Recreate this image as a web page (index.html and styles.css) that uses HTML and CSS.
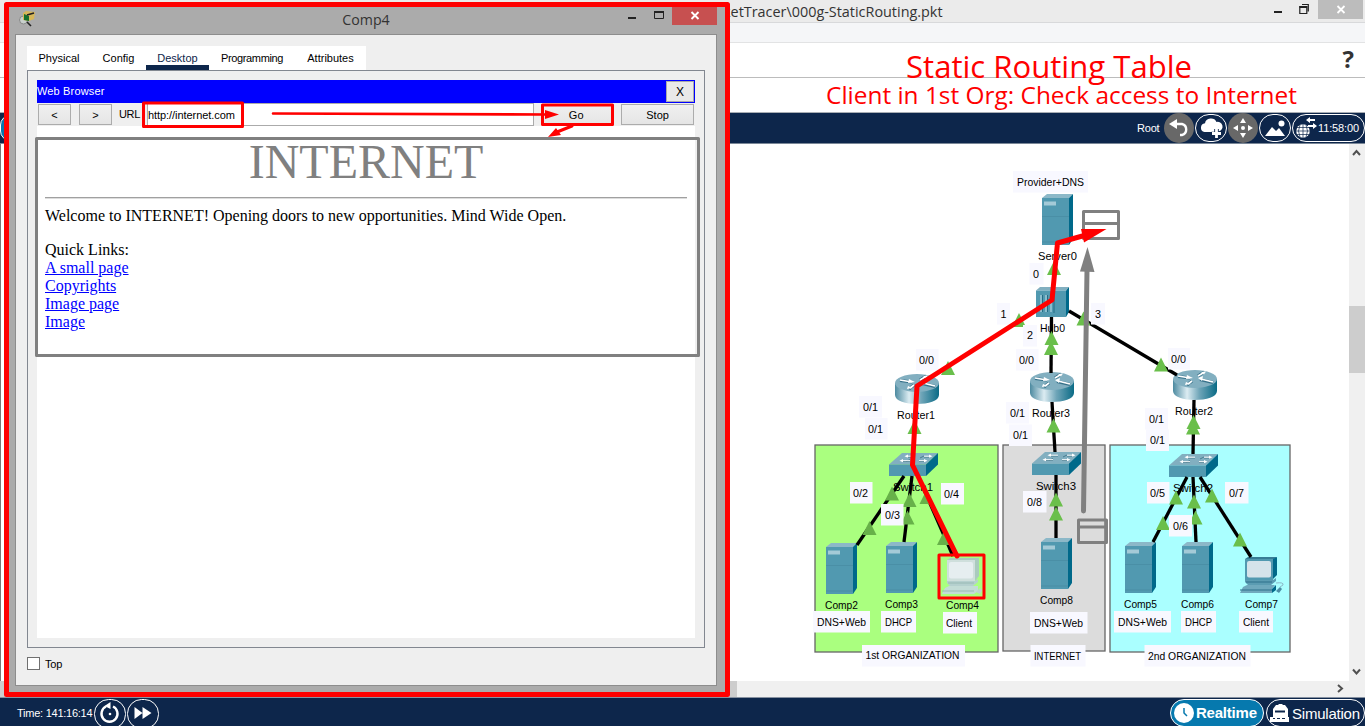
FILE: index.html
```html
<!DOCTYPE html>
<html lang="en">
<head>
<meta charset="utf-8">
<title>Packet Tracer</title>
<link rel="stylesheet" href="styles.css">
</head>
<body>
<div class="app">
  <header class="titlebar">
    <span class="path">ketTracer\000g-StaticRouting.pkt</span>
    <svg class="winbtns" width="100" height="22" viewBox="1265 0 100 22">
      <rect x="1318" width="45" height="19" fill="#bcbcbc"/>
      <path d="M1274 12h8" stroke="#222" stroke-width="2"/>
      <path d="M1299.8 6.5h7v7h-7zM1302 4.5h6.3v7" fill="none" stroke="#222" stroke-width="1.2"/><path d="M1299.5 7h7.5" stroke="#222" stroke-width="2"/>
      <path d="M1337.5 6l7 7m0-7l-7 7" stroke="#fff" stroke-width="1.8"/>
    </svg>
  </header>
  <div class="menubar"></div>
  <div class="toolbar"><span class="help">?</span></div>
  <div class="toolbar2"></div>
  <div class="navbar">
    <span class="edge"></span>
    <span class="root">Root</span>
    <svg width="202" height="30" viewBox="1163 113 202 30">
      <circle cx="1179" cy="128" r="15" fill="#686868"/>
      <path d="M1175 124h7a5.700 5.700 0 0 1 0 11h-2" fill="none" stroke="#fff" stroke-width="2.400"/><path d="M1169 124l8-5v10z" fill="#fff"/>
      <rect x="1195.500" y="114.500" width="31" height="27" rx="13.500" class="ring"/>
      <path d="M1204.500 132a4.400 4.400 0 0 1 .5-8.700 6 5.500 0 0 1 11.500-1.300 4.800 4.800 0 0 1 2.500 9.300l-1 .7z" fill="#fff"/><path d="M1216.500 129v10m-5-5h10" stroke="#0d264b" stroke-width="4.500"/><path d="M1216.500 129v9m-4.500-4.500h9" stroke="#fff" stroke-width="2.800"/>
      <circle cx="1243" cy="128" r="15" fill="#686868"/>
      <path d="M1243 118l3 5h-6zM1243 138l3-5h-6zM1233 128l5-3v6zM1253 128l-5-3v6z" fill="#fff"/><circle cx="1243" cy="128" r="2" fill="#fff"/>
      <rect x="1259.500" y="114.500" width="31" height="27" rx="13.500" class="ring"/>
      <path d="M1265 136l7-9 4 4 3-3 6 8z" fill="#fff"/><circle cx="1281.500" cy="123.500" r="3" fill="#fff"/>
      <rect x="1292.500" y="114.500" width="72" height="27" rx="13.500" class="ring"/>
      <circle cx="1303" cy="131" r="6.800" fill="#fff"/><path d="M1296 131h14M1297 127.500h12M1297 134.500h12M1303 124v14M1300 125q-3 6 0 12M1306 125q3 6 0 12" stroke="#0d264b" stroke-width=".7" fill="none"/>
      <path d="M1308 120h7m-7 6h7" stroke="#fff" stroke-width="1.800"/><path d="M1310 117v6l-4-3zM1313 123v6l4-3z" fill="#fff"/>
      <text x="1318" y="132" class="navtext" textLength="41">11:58:00</text>
    </svg>
  </div>
  <main class="workspace">
    <svg id="topology" class="topology" viewBox="0 144 1349 537">
      <defs>
        <linearGradient id="metal"><stop offset="0" stop-color="#4c8aa0"/><stop offset=".32" stop-color="#dcecf2"/><stop offset=".6" stop-color="#6fa5b8"/><stop offset="1" stop-color="#0a6b86"/></linearGradient>
        <symbol id="server" overflow="visible"><path d="M0 4l5-4h26l-4 4z" fill="#8cb8c8"/><path d="M27 4l4-4v45l-4 6z" fill="#00698a"/><path d="M0 4h27v47H0z" fill="#5199b0"/><path d="M2 7.500h12v4H2z" fill="#a4cad7"/><path d="M0 22.500h27M0 48h27" stroke="#478ba2" stroke-width=".7"/></symbol>
        <symbol id="switch" overflow="visible"><path d="M0 11.500L13 0h36L37 11.500z" fill="#82afc0"/><path d="M37 11.500L49 0v11.500L37 23z" fill="#00698a"/><path d="M0 11.500h37V23H0z" fill="#5199b0"/><path d="M18 4h8m9 0h6M13 8.500h8m9 0h6M31 5l4-2M17 8.500l4-2" stroke="#396e83" stroke-width=".8"/><path d="M18 3.200h8m9 0h6M13 7.700h8m9 0h6" stroke="#fff"/><path d="M19 1.500l-3.500 1.700 3.500 1.600zM40 1.500l3.500 1.700-3.500 1.600zM14 6l-3.500 1.700 3.500 1.600zM35 6l3.500 1.700-3.500 1.600z" fill="#fff"/></symbol>
        <symbol id="router" overflow="visible"><path d="M0 9v12c0 12 44 12 44 0V9z" fill="url(#metal)"/><ellipse cx="22" cy="9" rx="22" ry="9" fill="#82afc0"/><path d="M5 6.500l12 1.500M27 9.500l13 3M25 6l6-4M19 11l-5 4" stroke="#38728a" stroke-width="3.200"/><path d="M5 6l12 2M28 9l12 3M25 6l5-3M19 11l-4 3" stroke="#fff" stroke-width="1.600"/><path d="M14 5l6 3-7 1zM30 6l-5 2 4 3zM28 2l5-.5-2 3zM18 14l-6 1 1-3z" fill="#fff"/></symbol>
        <symbol id="hub" overflow="visible"><path d="M0 3.500L4 0h29l-3 3.500z" fill="#82afc0"/><path d="M30 3.500L33 0v25l-3 5z" fill="#00698a"/><path d="M0 3.500h30V30H0z" fill="#5199b0"/><path d="M5 8v17M10 8v17M15 8v17" stroke="#c4e1ea"/><path d="M6.500 8v17M11.500 8v17M18 7v19" stroke="#246c86"/></symbol>
        <symbol id="pc" overflow="visible"><path d="M5 2l3-2h29l-4 3v20H5z" fill="#377d95"/><path d="M33 2l4-2v18l-4 4z" fill="#00698a"/><path d="M5 2h28v21H5z" fill="#5199b0"/><rect x="7" y="4" width="24" height="16.500" rx="2" fill="#d5e3ea"/><path d="M5 23h28l3-2v3l-5 4H8l-3-3z" fill="#5b9cb2"/><path d="M3 30l4-2h28l-3 4v4H0z" fill="#6fa9bd"/><path d="M32 32l4-4v5l-4 3z" fill="#00698a"/><path d="M0 33h32M6 25h26" stroke="#2f718b"/><path d="M36 34l4-4 2 2-3 4z" fill="#4b8da5"/><path d="M36 26q8-1 7 2l-3 2" fill="none" stroke="#8cb8c8"/></symbol>
        <symbol id="pc-selected" overflow="visible"><path d="M5 2l3-2h29v18l-4 5H5z" fill="#a9cbbd"/><path d="M5 2h28v21H5z" fill="#cfdfdc"/><rect x="7" y="4" width="24" height="16.500" rx="2" fill="#e6eef0"/><path d="M5 23h28l3-2v3l-5 4H8l-3-3z" fill="#b5d0ce"/><path d="M3 30l4-2h28l1 0v5l-4 3H0z" fill="#c3dcd6"/><path d="M0 33h32M6 25h26" stroke="#98b9b4"/><path d="M34 34l4-4 2 2-2 4z" fill="#bcd6cd"/></symbol>
      </defs>
    </svg>
    <svg class="vscroll" width="16" height="537" viewBox="1349 144 16 537"><rect x="1349" y="306" width="16" height="67" fill="#cdcdcd"/><path d="M1353 155l3.500-4 3.500 4M1353 669.500l3.500 4 3.500-4" fill="none" stroke="#505050" stroke-width="2"/></svg>
  </main>
  <div class="hscroll"><span class="thumb"></span><svg width="16" height="16"><path d="M2 4l4 3.500-4 3.500" fill="none" stroke="#505050" stroke-width="2"/></svg></div>
  <footer class="bottombar">
    <span class="time">Time: 141:16:14</span>
    <svg class="playback" width="68" height="29" viewBox="93 697 68 29">
      <rect x="94.500" y="699.500" width="31" height="29" rx="14" class="ring"/><rect x="127.500" y="699.500" width="31" height="29" rx="14" class="ring"/>
      <path d="M113 706.500a8 8 0 1 1-7 0" fill="none" stroke="#fff" stroke-width="2.400"/><path d="M104.500 706l6-4v7z" fill="#fff"/><circle cx="110" cy="714" r="1.300" fill="#fff"/>
      <path d="M134.500 707l8 6-8 6zM142.500 707l9 6-9 6z" fill="#fff"/>
    </svg>
    <svg class="modes" width="196" height="29" viewBox="1169 697 196 29">
      <rect x="1170.500" y="699.500" width="93" height="27" rx="13.500" fill="#0679ae" stroke="#fff"/>
      <circle cx="1184" cy="713" r="10" fill="#fff"/><path d="M1184 708v5l3 3" fill="none" stroke="#0679ae" stroke-width="1.500"/>
      <text x="1196" y="718" class="mode strong" textLength="61">Realtime</text>
      <rect x="1266.500" y="699.500" width="98" height="27" rx="13.500" class="ring"/>
      <path d="M1273 712v-3l3-4h2l1-1h3l1 1h2l3 4v9h-15z" fill="#fff"/><path d="M1275 711.500h10" stroke="#0d264b" stroke-width="2"/><path d="M1270 717h3v2h2v-2h2v2h3v-2h2v2h3v-2h4v5h-19z" fill="#fff"/>
      <text x="1292" y="718.500" class="mode" textLength="68">Simulation</text>
    </svg>
  </footer>
</div>

<section class="window">
  <div class="wtitle">
    <svg class="wicon" width="16" height="16"><circle cx="4.500" cy="9" r="4" fill="#c8d0cc" stroke="#888"/><path d="M4 2l3-2 9 1-1 7-5 2-6-1z" fill="#d7b75a"/><path d="M5 3l5 2v5l-5-1z" fill="#16702c"/><path d="M8 4l7-2M8 11l4 4" stroke="#222" stroke-width="1.600"/></svg>
    <span class="wname">Comp4</span>
    <svg class="wbtns" width="98" height="18" viewBox="620 7 98 18"><rect x="672" y="7" width="45" height="18" fill="#c75050"/><path d="M628 18h8" stroke="#222" stroke-width="2"/><path d="M654.500 11.500h9v7h-9z" fill="none" stroke="#222"/><path d="M654 12h10" stroke="#222" stroke-width="2"/><path d="M691.500 12l7 7m0-7l-7 7" stroke="#fff" stroke-width="1.900"/></svg>
  </div>
  <div class="client">
    <nav class="tabs"><span class="tab physical">Physical</span><span class="tab config">Config</span><span class="tab desktop">Desktop</span><span class="tab prog">Programming</span><span class="tab attr">Attributes</span></nav>
    <div class="panel">
      <div class="browser">
        <div class="bhead"><span class="bname">Web Browser</span><span class="bclose">X</span></div>
        <div class="burl"><span class="btn back">&lt;</span><span class="btn fwd">&gt;</span><span class="label">URL</span><span class="field">http://internet.com</span><span class="btn go">Go</span><span class="btn stop">Stop</span></div>
        <article class="page">
          <h1>INTERNET</h1>
          <div class="rule"></div>
          <p class="welcome">Welcome to INTERNET! Opening doors to new opportunities. Mind Wide Open.</p>
          <p class="links">Quick Links:<br><a href="#">A small page</a><br><a href="#">Copyrights</a><br><a href="#">Image page</a><br><a href="#">Image</a></p>
        </article>
      </div>
    </div>
    <div class="topcheck"><span class="box"></span><span>Top</span></div>
  </div>
</section>

<svg class="annotations" width="1365" height="726" viewBox="0 0 1365 726">
  <g fill="none" stroke="#808080" stroke-width="3" stroke-linejoin="round">
    <rect x="36.500" y="138.500" width="662" height="217"/>
    <path d="M1083.500 211.500h35v27h-35zM1083.500 223.500h35M1078.500 520h28v22.500h-28zM1078.500 527h28"/>
    <path d="M1083.500 511L1087 270" stroke-width="5" stroke-linecap="round"/>
  </g>
  <path d="M1080 271.500L1087.500 247l7 25z" fill="#808080"/>
  <g fill="none" stroke="#f00" stroke-linejoin="round" stroke-linecap="round">
    <rect x="6.500" y="4.500" width="721" height="690" stroke-width="5"/>
    <rect x="143.500" y="103" width="99" height="23.500" stroke-width="3"/>
    <rect x="542.500" y="105" width="70" height="19.500" stroke-width="3"/>
    <path d="M273 113.500L548 114.500" stroke-width="2.600"/><path d="M572 126l-15 6" stroke-width="3"/>
    <path d="M957 556L912.500 465L917 386L1052 300L1057.500 243L1086 235" stroke-width="5"/>
    <rect x="939" y="555" width="45" height="43" stroke-width="3"/>
  </g>
  <path d="M545 110l14 4.500-14 4.500zM548 137l8-9 5 7zM1081 229h25.500L1084 242.500z" fill="#f00"/>
  <g class="headline"><text x="906" y="78" font-size="31" textLength="286" lengthAdjust="spacingAndGlyphs">Static Routing Table</text><text x="826" y="104" font-size="24.500" textLength="471" lengthAdjust="spacingAndGlyphs">Client in 1st Org: Check access to Internet</text></g>
</svg>
<script src="topology.js"></script>
</body>
</html>
```

FILE: styles.css
```css
* { box-sizing: border-box; }
body { margin: 0; width: 1365px; height: 726px; overflow: hidden; position: relative; background: #fff; font-family: "Liberation Sans", Arial, sans-serif; font-size: 11px; color: #000; }
svg { display: block; flex: none; }
.app { display: flex; flex-direction: column; width: 1365px; height: 726px; }
.titlebar { flex: none; height: 23px; background: #ebebeb; border-bottom: 1px solid #d8d9db; display: flex; justify-content: space-between; padding-left: 723px; }
.path { font: 14.4px/24px "Open Sans", "Noto Sans", sans-serif; color: #333; white-space: nowrap; }
.menubar { flex: none; height: 20px; background: #f5f6f8; border-bottom: 1px solid #e2e3e4; }
.toolbar { flex: none; height: 35px; border-bottom: 1px solid #bcbcbc; display: flex; justify-content: flex-end; padding: 1px 11px 0 0; }
.help { font: bold 24px/30px "Open Sans", sans-serif; color: #333; }
.toolbar2 { flex: none; height: 35px; border-bottom: 1px solid #a9aeb4; }
.navbar { flex: none; height: 31px; background: #0d264b; border-bottom: 1px solid #7a8797; display: flex; align-items: center; color: #fff; }
.edge { width: 20px; height: 26px; border: 1px solid #fff; border-radius: 13px; background: #0679ae; }
.root { margin-left: 1117px; width: 26px; white-space: nowrap; letter-spacing: -.2px; }
.ring { fill: none; stroke: #fff; stroke-width: 1; }
.navtext { fill: #fff; font-size: 11px; }
.workspace { flex: none; height: 537px; display: flex; border-left: 1px solid #777; }
.topology { width: 1349px; height: 537px; margin-left: -1px; }
.vscroll { background: #f0f0f0; }
.hscroll { flex: none; height: 16px; background: #f0f0f0; display: flex; justify-content: space-between; padding-right: 13px; }
.thumb { width: 737px; background: #cdcdcd; }
.bottombar { flex: none; height: 29px; background: #0d264b; border-top: 1px solid #8791a0; color: #fff; display: flex; padding-left: 17px; }
.bottombar svg { margin-top: -1px; }
.time { width: 76px; line-height: 30px; white-space: nowrap; letter-spacing: -.25px; }
.modes { margin-left: auto; }
.mode { fill: #fff; font-size: 15px; }
.strong { font-weight: bold; }

.window { position: absolute; left: 9px; top: 7px; width: 717px; height: 686px; background: #ababab; display: flex; flex-direction: column; padding: 0 9px 7px 6px; }
.wtitle { flex: none; height: 27px; display: flex; padding: 0 0 0 4px; }
.wicon { margin-top: 4px; }
.wname { flex: 1; padding-left: 77px; text-align: center; font: 14.2px/25px "Open Sans", "Noto Sans", sans-serif; color: #333; }
.wbtns { margin-right: -1px; }
.client { flex: 1; background: #efefef; border: 1px solid #8d8d8d; padding: 11px 11px 0; }
.tabs { display: flex; width: 339px; height: 24px; background: #fff; line-height: 25px; }
.tab { text-align: center; white-space: nowrap; }
.physical { width: 64px; }
.config { width: 55px; }
.desktop { width: 63px; border-bottom: 5px solid #0d264b; color: #0d264b; }
.prog { width: 86px; letter-spacing: -.35px; }
.attr { width: 71px; }
.panel { width: 678px; height: 578px; border: 1px solid #828790; padding: 9px; }
.browser { width: 658px; height: 558px; background: #fff; }
.bhead { height: 23px; background: #00f; color: #fff; display: flex; justify-content: space-between; line-height: 21px; padding: 1px 1px 1px 0; }
.bname { letter-spacing: .15px; }
.bclose { width: 28px; height: 21px; background: #e9e9e9; border: 1px solid #aaa; color: #000; text-align: center; line-height: 21px; font-size: 12px; }
.burl { height: 23px; background: #efefef; display: flex; align-items: flex-start; padding: 1px 1px 0; }
.btn { height: 21px; border: 1px solid #acacac; background: linear-gradient(#f0f0f0, #e5e5e5); text-align: center; line-height: 20px; }
.back { width: 33px; }
.fwd { width: 33px; margin-left: 8px; }
.label { width: 23px; margin: 0 5px 0 7px; line-height: 21px; letter-spacing: -.3px; }
.field { width: 388px; height: 23px; margin-top: -1px; border: 1px solid #ababab; background: #fff; line-height: 23px; letter-spacing: -.05px; }
.go { width: 73px; margin-left: 7px; padding-right: 3px; }
.stop { width: 73px; margin-left: 7px; }
.page { padding: 10px 8px; font-family: "Liberation Serif", "Times New Roman", serif; font-size: 16px; line-height: 18px; }
.page h1 { margin: 0; height: 52px; text-align: center; color: #808080; font-size: 48px; font-weight: normal; line-height: 52px; }
.page p { margin: 0; }
.rule { margin-top: 9px; height: 2px; border-top: 1px solid #a0a0a0; border-bottom: 1px solid #ddd; }
.page .welcome { margin-top: 8px; white-space: nowrap; }
.page .links { margin-top: 16px; }
.page a { color: #00f; }
.topcheck { display: flex; gap: 5px; height: 13px; margin-top: 9px; line-height: 14px; letter-spacing: -.2px; }
.box { width: 13px; height: 13px; background: #fff; border: 1px solid #707070; }

.annotations { position: absolute; left: 0; top: 0; }
.headline { fill: #f00; font-family: "Open Sans", "Noto Sans", sans-serif; }
.zone { stroke: #666; stroke-width: 1.300; }
.link { stroke: #000; stroke-width: 3.3; }
.status { fill: #6abf4b; }
.status.dim { fill: #67b149; }
.chip { fill: #f8f8ff; }
.caption { font-size: 11px; }
```

FILE: topology.js
```js
const svg = document.getElementById('topology');

function add(tag, attrs, text) {
  const el = document.createElementNS('http://www.w3.org/2000/svg', tag);
  for (const key in attrs) el.setAttribute(key, attrs[key]);
  if (text) {
    el.textContent = text;
    el.setAttribute('lengthAdjust', 'spacingAndGlyphs');
  }
  svg.appendChild(el);
}

// x, y, width, height, fill
[[815, 445, 183, 207, '#aaff7f'], [1003, 445, 102, 206, '#dcdcdc'], [1110, 445, 180, 207, '#aaffff']]
  .forEach(([x, y, width, height, fill]) => add('rect', { x, y, width, height, fill, class: 'zone' }));

// symbol, x, y
[['server', 1042, 194], ['hub', 1036, 287], ['router', 895, 374], ['router', 1030, 372], ['router', 1173, 370],
 ['switch', 889, 453], ['switch', 1032, 452], ['switch', 1169, 454],
 ['server', 826, 543], ['server', 886, 542], ['server', 1041, 538], ['server', 1125, 542], ['server', 1182, 542],
 ['pc', 1240, 557], ['pc-selected', 942, 558]]
  .forEach(([id, x, y]) => add('use', { href: '#' + id, x, y }));

// name, left, baseline, width
[['Server0', 1038, 260, 39], ['Hub0', 1040, 332, 25], ['Router1', 897, 419, 38], ['Router3', 1032, 417, 38],
 ['Router2', 1175, 415, 38], ['Switch1', 893, 491, 40], ['Switch3', 1036, 490, 40], ['Switch2', 1173, 492, 40],
 ['Comp2', 825, 609, 33], ['Comp3', 885, 608, 33], ['Comp4', 946, 609, 33], ['Comp8', 1040, 604, 33],
 ['Comp5', 1124, 608, 33], ['Comp6', 1181, 608, 33], ['Comp7', 1245, 608, 33]]
  .forEach(([t, x, y, w]) => add('text', { x, y, textLength: w, class: 'caption' }, t));

[[1051.5, 317, 1051, 373], [1069, 311, 1177, 375], [1052, 402, 1055, 452], [1194, 400, 1193, 454],
 [904, 476, 857, 545], [912, 476, 904, 542], [918, 476, 953, 556], [1056, 475, 1056, 538],
 [1187, 477, 1153, 542], [1193, 477, 1196, 542], [1200, 477, 1251, 557]]
  .forEach(([x1, y1, x2, y2]) => add('line', { x1, y1, x2, y2, class: 'link' }));

// bottom centre of each link light
[[1054, 275], [1019, 327], [948, 375], [1051.5, 345], [1051, 355], [1053.5, 432.5], [1083.5, 325.5], [1161, 371.5],
 [1193.5, 429], [1193, 434.5], [914.5, 434], [892, 500.5, 1], [869.5, 535, 1], [909.5, 507, 1], [907.5, 524.5, 1],
 [926.5, 504, 1], [944, 545, 1], [1056, 506.5], [1056, 520.5], [1176, 504.5], [1163, 530], [1194, 508.5],
 [1195.5, 524.5], [1212, 502.5], [1240, 546.5]]
  .forEach(([x, y, dim]) => add('path', { d: `M${x - 7} ${y}h14l-7 -14z`, class: dim ? 'status dim' : 'status' }));

// text, box left, box top, box width, text left, baseline, text width
[['Provider+DNS', 1013, 171, 75, 1017, 186, 67],
 ['0', 1029.5, 263, 14, 1033, 278, 6], ['1', 997, 303, 13, 1000.5, 318, 6], ['2', 1023, 325, 14, 1027, 339, 6],
 ['3', 1091, 303, 14, 1095, 318, 6], ['0/0', 916, 349, 22.5, 919, 364, 15], ['0/0', 1016, 349, 22.5, 1019, 364, 15],
 ['0/0', 1168, 348, 22, 1171, 363, 15], ['0/1', 859, 396, 23, 863, 411, 15], ['0/1', 865, 418, 22.5, 868, 433, 15],
 ['0/1', 1006, 402, 23, 1010, 417, 15], ['0/1', 1009, 424.5, 23, 1013, 439, 15], ['0/1', 1145, 408, 23, 1149, 423, 15],
 ['0/1', 1146, 429.5, 23, 1150, 444, 15], ['0/2', 850, 482, 22.5, 853, 497, 15], ['0/3', 881, 504, 22.5, 885, 519, 15],
 ['0/4', 941, 483, 23, 944, 498, 15], ['0/8', 1023, 491, 23.5, 1027, 506, 15], ['0/5', 1147, 482, 22.5, 1150, 497, 15],
 ['0/6', 1169, 515, 23, 1173, 530, 15], ['0/7', 1225, 482, 23.5, 1229, 497, 15],
 ['DNS+Web', 813, 611, 57, 817, 626, 49], ['DNS+Web', 1030, 612, 57.5, 1034, 627, 49], ['DNS+Web', 1114, 611, 57, 1118, 626, 49],
 ['DHCP', 881, 611, 35, 885, 626, 27], ['DHCP', 1181, 611, 35, 1185, 626, 27],
 ['Client', 943, 612, 34, 946, 627, 26], ['Client', 1239, 611, 34, 1243, 626, 26],
 ['1st ORGANIZATION', 862, 645, 103, 865.5, 659, 94], ['2nd ORGANIZATION', 1144.5, 645, 106, 1148, 660, 98],
 ['INTERNET', 1030.5, 645, 55, 1034, 660, 47]]
  .forEach(([t, bx, by, bw, x, y, w]) => {
    add('rect', { x: bx, y: by, width: bw, height: 21.5, class: 'chip' });
    add('text', { x, y, textLength: w, class: 'caption' }, t);
  });
```
